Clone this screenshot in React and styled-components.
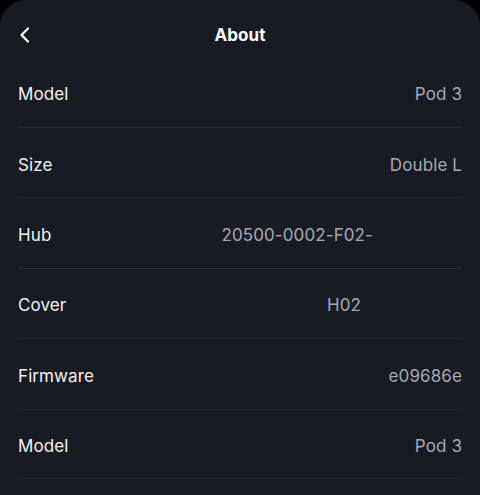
import React from "react";
import styled, { createGlobalStyle } from "styled-components";

const Global = createGlobalStyle`
  html, body { margin: 0; padding: 0; background: #000; }
  body { font-family: Inter, "Noto Sans", sans-serif; -webkit-font-smoothing: antialiased; }
`;

const Sheet = styled.div`
  width: 480px;
  height: 495px;
  background: #181b22;
  border-radius: 26px 26px 0 0;
  overflow: hidden;
  box-sizing: border-box;
`;

const Header = styled.header`
  height: 58px;
  display: grid;
  grid-template-columns: 60px 1fr 60px;
  align-items: center;
  padding-top: 12px;
  box-sizing: border-box;
`;

const BackButton = styled.button`
  background: none;
  border: 0;
  padding: 0 0 0 19px;
  display: flex;
  align-items: center;
  color: #fff;
  cursor: pointer;
`;

const Title = styled.h1`
  margin: 0;
  text-align: center;
  font-size: 17px;
  font-weight: 700;
  color: #ffffff;
  letter-spacing: 0.1px;
`;

const List = styled.div`
  padding: 0 18px;
  display: flex;
  flex-direction: column;
`;

const Row = styled.div`
  height: 70.4px;
  display: flex;
  align-items: center;
  justify-content: space-between;
  border-top: 1.5px solid #2a2d35;
  box-sizing: border-box;
  padding-top: 4px;
  &:first-child { border-top: 0; height: 69px; padding-top: 3px; }
  &:last-child { border-bottom: 1.5px solid #2a2d35; }
`;

const Label = styled.span`
  font-size: 17px;
  color: #f2f2f5;
  letter-spacing: 0.1px;
`;

const Value = styled.span`
  font-size: 17px;
  color: #a6a8b6;
  letter-spacing: 0.1px;
  margin-right: ${(p) => p.$inset || 0}px;
`;

const rows = [
  { label: "Model", value: "Pod 3" },
  { label: "Size", value: "Double L" },
  { label: "Hub", value: "20500-0002-F02-", inset: 89 },
  { label: "Cover", value: "H02", inset: 101 },
  { label: "Firmware", value: "e09686e" },
  { label: "Model", value: "Pod 3" },
];

export default function App() {
  return (
    <>
      <Global />
      <Sheet>
        <Header>
          <BackButton aria-label="Back">
            <svg width="12" height="16" viewBox="0 0 12 16" fill="none">
              <path d="M9 1.5 L2.5 8 L9 14.5" stroke="#fff" strokeWidth="2.2" strokeLinecap="round" strokeLinejoin="round" />
            </svg>
          </BackButton>
          <Title>About</Title>
          <span />
        </Header>
        <List>
          {rows.map((r, i) => (
            <Row key={i}>
              <Label>{r.label}</Label>
              <Value $inset={r.inset}>{r.value}</Value>
            </Row>
          ))}
        </List>
      </Sheet>
    </>
  );
}
